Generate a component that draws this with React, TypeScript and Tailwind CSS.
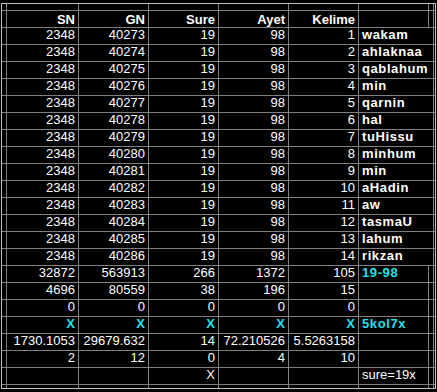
type Row = {
  sn: string;
  gn: string;
  sure: string;
  ayet: string;
  kelime: string;
  word: string;
  cyan?: boolean;
  wordCyan?: boolean;
  wordBold?: boolean;
  span?: boolean;
};

const words = [
  "wakam",
  "ahlaknaa",
  "qablahum",
  "min",
  "qarnin",
  "hal",
  "tuHissu",
  "minhum",
  "min",
  "aHadin",
  "aw",
  "tasmaU",
  "lahum",
  "rikzan",
];

const rows: Row[] = [
  ...words.map((w, i) => ({
    sn: "2348",
    gn: String(40273 + i),
    sure: "19",
    ayet: "98",
    kelime: String(i + 1),
    word: w,
    wordBold: true,
    span: true,
  })),
  { sn: "32872", gn: "563913", sure: "266", ayet: "1372", kelime: "105", word: "19-98", wordBold: true, wordCyan: true },
  { sn: "4696", gn: "80559", sure: "38", ayet: "196", kelime: "15", word: "" },
  { sn: "0", gn: "0", sure: "0", ayet: "0", kelime: "0", word: "" },
  { sn: "X", gn: "X", sure: "X", ayet: "X", kelime: "X", word: "5kol7x", cyan: true, wordBold: true, wordCyan: true },
  { sn: "1730.1053", gn: "29679.632", sure: "14", ayet: "72.210526", kelime: "5.5263158", word: "" },
  { sn: "2", gn: "12", sure: "0", ayet: "4", kelime: "10", word: "" },
  { sn: "", gn: "", sure: "X", ayet: "", kelime: "", word: "sure=19x" },
];

const headers = ["SN", "GN", "Sure", "Ayet", "Kelime"];

function Blank() {
  return <div className="bg-black" />;
}

function NumCell({ value, cyan }: { value: string; cyan?: boolean }) {
  return (
    <div
      className={`bg-black pr-[3px] text-right leading-[13px] whitespace-nowrap overflow-hidden ${
        cyan ? "text-[#22e0ee] font-bold" : "text-white"
      }`}
    >
      {value}
    </div>
  );
}

export default function App() {
  return (
    <div
      className="w-[437px] h-[392px] bg-black overflow-hidden text-[13px]"
      style={{ fontFamily: '"Liberation Sans", Arial, sans-serif' }}
    >
      <div className="ml-px mt-[3px] w-[435px] h-[386px] border border-[#c0c0c0]">
        <div className="grid grid-cols-[4px_71px_69px_69px_69px_69px_69px_4px_1px] grid-rows-[6px_16px_repeat(21,16px)_3px] gap-px bg-[#808080] h-full">
          {/* top strip */}
          {Array.from({ length: 9 }).map((_, i) => (
            <Blank key={`t${i}`} />
          ))}

          {/* header */}
          <Blank />
          {headers.map((h) => (
            <div
              key={h}
              className="bg-black pr-[3px] pt-px text-right font-bold text-white leading-[16px]"
            >
              {h}
            </div>
          ))}
          <Blank />
          <Blank />
          <Blank />

          {rows.map((r, i) => (
            <div key={i} className="contents">
              <Blank />
              <NumCell value={r.sn} cyan={r.cyan} />
              <NumCell value={r.gn} cyan={r.cyan} />
              <NumCell value={r.sure} cyan={r.cyan} />
              <NumCell value={r.ayet} cyan={r.cyan} />
              <NumCell value={r.kelime} cyan={r.cyan} />
              <div
                className={`bg-black pl-[3px] leading-[13px] whitespace-nowrap overflow-hidden ${
                  r.span ? "col-span-2" : ""
                } ${r.wordBold ? "font-bold tracking-[0.6px]" : ""} ${
                  r.wordCyan ? "text-[#22e0ee]" : "text-white"
                }`}
              >
                {r.word}
              </div>
              {!r.span && <Blank />}
              <Blank />
            </div>
          ))}

          {/* bottom strip */}
          {Array.from({ length: 9 }).map((_, i) => (
            <Blank key={`b${i}`} />
          ))}
        </div>
      </div>
    </div>
  );
}
